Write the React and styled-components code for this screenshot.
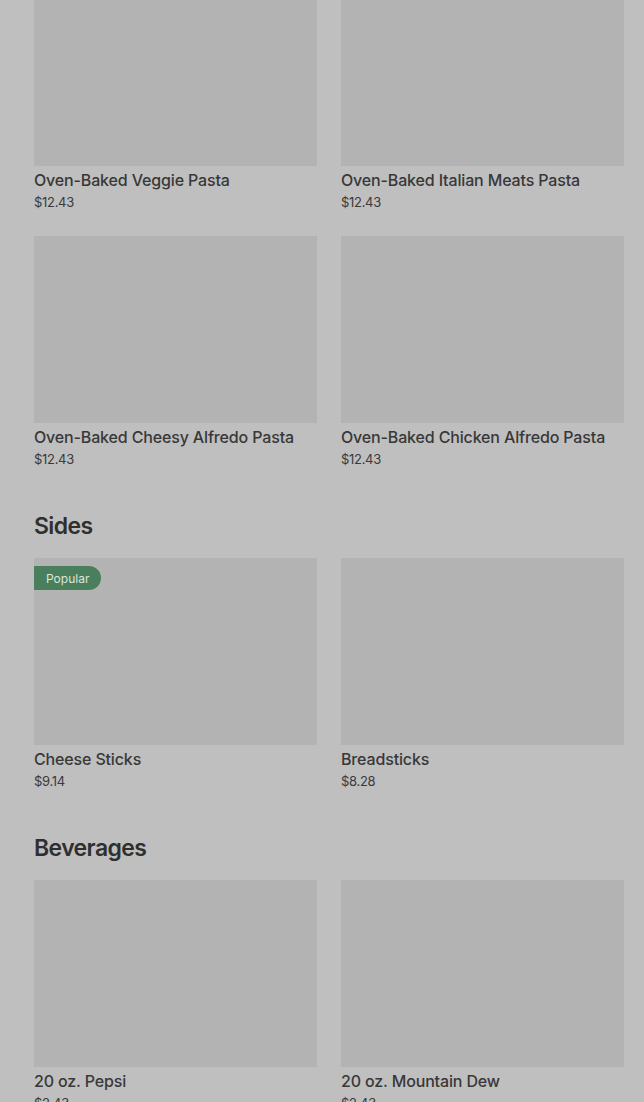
import React from "react";
import styled, { createGlobalStyle } from "styled-components";

const GlobalStyle = createGlobalStyle`
  html, body {
    margin: 0;
    padding: 0;
    background: #bfbfbf;
    overflow: hidden;
  }
  body {
    font-family: Inter, "Noto Sans", "Liberation Sans", sans-serif;
    color: #333333;
  }
`;

const sections = [
  {
    title: null,
    items: [
      { name: "Oven-Baked Veggie Pasta", price: "$12.43" },
      { name: "Oven-Baked Italian Meats Pasta", price: "$12.43" },
      { name: "Oven-Baked Cheesy Alfredo Pasta", price: "$12.43" },
      { name: "Oven-Baked Chicken Alfredo Pasta", price: "$12.43" },
    ],
  },
  {
    title: "Sides",
    items: [
      { name: "Cheese Sticks", price: "$9.14", popular: true },
      { name: "Breadsticks", price: "$8.28" },
    ],
  },
  {
    title: "Beverages",
    items: [
      { name: "20 oz. Pepsi", price: "$2.43" },
      { name: "20 oz. Mountain Dew", price: "$2.43" },
    ],
  },
];

const App = () => {
  return (
    <>
      <GlobalStyle />
      <Page>
        {sections.map((section, i) => (
          <Section key={i}>
            {section.title && <SectionTitle>{section.title}</SectionTitle>}
            <Grid>
              {section.items.map((item) => (
                <Card key={item.name}>
                  <Thumb>
                    {item.popular && <Badge>Popular</Badge>}
                  </Thumb>
                  <ItemName>{item.name}</ItemName>
                  <Price>{item.price}</Price>
                </Card>
              ))}
            </Grid>
          </Section>
        ))}
      </Page>
    </>
  );
};

export default App;

const Page = styled.div`
  margin-top: -21px;
  padding: 0 20px 0 34px;
  display: flex;
  flex-direction: column;
  gap: 41px;
`;

const Section = styled.section`
  display: flex;
  flex-direction: column;
`;

const SectionTitle = styled.h2`
  margin: 0 0 16px;
  font-size: 23px;
  line-height: 32px;
  font-weight: 600;
  letter-spacing: -0.6px;
  color: #2f2f2f;
`;

const Grid = styled.div`
  display: grid;
  grid-template-columns: 283px 283px;
  column-gap: 24px;
  row-gap: 24px;
`;

const Card = styled.div`
  display: flex;
  flex-direction: column;
`;

const Thumb = styled.div`
  position: relative;
  height: 187px;
  background: #b3b3b3;
`;

const Badge = styled.span`
  position: absolute;
  top: 8px;
  left: 0;
  height: 24px;
  padding: 0 12px;
  display: flex;
  align-items: center;
  background: #4a7f5d;
  color: #d9e6dc;
  font-size: 12px;
  border-radius: 0 12px 12px 0;
`;

const ItemName = styled.div`
  margin-top: 2px;
  font-size: 16px;
  line-height: 24px;
  font-weight: 500;
  letter-spacing: -0.15px;
  color: #383838;
`;

const Price = styled.div`
  font-size: 13px;
  line-height: 20px;
  color: #3a3a3a;
  letter-spacing: -0.3px;
`;
